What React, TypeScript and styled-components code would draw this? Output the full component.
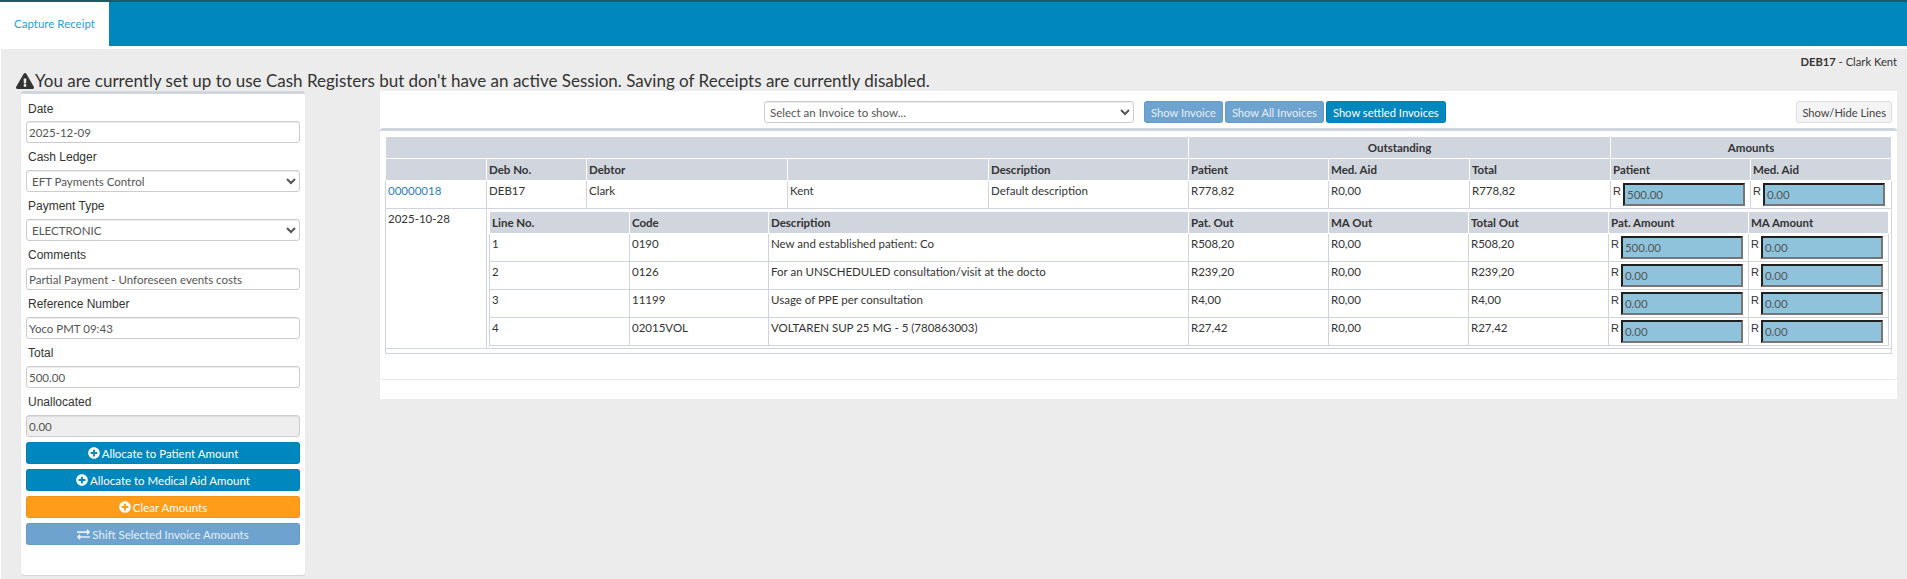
import * as React from 'react';
import styled, { createGlobalStyle } from 'styled-components';
import { FaExchangeAlt, FaExclamationTriangle, FaPlusCircle } from 'react-icons/fa';

const UI_FONT = `Lato, 'Noto Sans', sans-serif`;
const LABEL_FONT = `'Liberation Sans', Arial, sans-serif`;

const colors = {
  blue: '#0087bd',
  orange: '#ff9c1a',
  muted: '#6ea3d0',
  head: '#d0d5de',
  line: '#d0d4e0',
  field: '#8fc3dc',
  text: '#333',
};

type InvoiceLine = {
  no: string;
  code: string;
  description: string;
  patOut: string;
  maOut: string;
  total: string;
  patAmount: string;
};

const lines: InvoiceLine[] = [
  { no: '1', code: '0190', description: 'New and established patient: Co', patOut: 'R508,20', maOut: 'R0,00', total: 'R508,20', patAmount: '500.00' },
  { no: '2', code: '0126', description: 'For an UNSCHEDULED consultation/visit at the docto', patOut: 'R239,20', maOut: 'R0,00', total: 'R239,20', patAmount: '0.00' },
  { no: '3', code: '11199', description: 'Usage of PPE per consultation', patOut: 'R4,00', maOut: 'R0,00', total: 'R4,00', patAmount: '0.00' },
  { no: '4', code: '02015VOL', description: 'VOLTAREN SUP 25 MG - 5 (780863003)', patOut: 'R27,42', maOut: 'R0,00', total: 'R27,42', patAmount: '0.00' },
];

const outerCols = [101, 100, 201, 201, 200, 140, 141, 141, 140, 141];
const innerCols = [140, 139, 420, 140, 140, 140, 140, 140];

const AmountField = ({ value }: { value: string }) => (
  <AmountWrap>
    <span>R</span>
    <AmountInput defaultValue={value} />
  </AmountWrap>
);

export default function App() {
  return (
    <>
      <GlobalStyle />
      <Page>
        <Header>
          <ActiveTab>Capture Receipt</ActiveTab>
        </Header>
        <Main>
          <PatientLine>
            <b>DEB17</b> - Clark Kent
          </PatientLine>
          <Warning>
            <FaExclamationTriangle size={18} />
            You are currently set up to use Cash Registers but don't have an active Session. Saving of Receipts are currently disabled.
          </Warning>
          <Columns>
            <FormPanel>
              <FieldLabel>Date</FieldLabel>
              <TextInput defaultValue="2025-12-09" />
              <FieldLabel>Cash Ledger</FieldLabel>
              <SelectInput defaultValue="EFT Payments Control">
                <option>EFT Payments Control</option>
              </SelectInput>
              <FieldLabel>Payment Type</FieldLabel>
              <SelectInput defaultValue="ELECTRONIC">
                <option>ELECTRONIC</option>
              </SelectInput>
              <FieldLabel>Comments</FieldLabel>
              <TextInput defaultValue="Partial Payment - Unforeseen events costs" />
              <FieldLabel>Reference Number</FieldLabel>
              <TextInput defaultValue="Yoco PMT 09:43" />
              <FieldLabel>Total</FieldLabel>
              <TextInput defaultValue="500.00" />
              <FieldLabel>Unallocated</FieldLabel>
              <TextInput defaultValue="0.00" disabled />
              <ActionStack>
                <ActionButton $bg={colors.blue}>
                  <FaPlusCircle size={12} /> Allocate to Patient Amount
                </ActionButton>
                <ActionButton $bg={colors.blue}>
                  <FaPlusCircle size={12} /> Allocate to Medical Aid Amount
                </ActionButton>
                <ActionButton $bg={colors.orange}>
                  <FaPlusCircle size={12} /> Clear Amounts
                </ActionButton>
                <ActionButton $bg={colors.muted}>
                  <FaExchangeAlt size={13} /> Shift Selected Invoice Amounts
                </ActionButton>
              </ActionStack>
            </FormPanel>
            <InvoicePanel>
              <Toolbar>
                <InvoiceSelect defaultValue="Select an Invoice to show...">
                  <option>Select an Invoice to show...</option>
                </InvoiceSelect>
                <ToolbarButton $bg={colors.muted}>Show Invoice</ToolbarButton>
                <ToolbarButton $bg={colors.muted}>Show All Invoices</ToolbarButton>
                <ToolbarButton $bg={colors.blue}>Show settled Invoices</ToolbarButton>
                <LinesButton>Show/Hide Lines</LinesButton>
              </Toolbar>
              <InvoiceCard>
                <OuterTable>
                  <colgroup>
                    {outerCols.map((w, i) => (
                      <col key={i} style={{ width: w }} />
                    ))}
                  </colgroup>
                  <thead>
                    <tr>
                      <Th colSpan={5} />
                      <Th colSpan={3} $center>Outstanding</Th>
                      <Th colSpan={2} $center>Amounts</Th>
                    </tr>
                    <tr>
                      <Th />
                      <Th>Deb No.</Th>
                      <Th>Debtor</Th>
                      <Th />
                      <Th>Description</Th>
                      <Th>Patient</Th>
                      <Th>Med. Aid</Th>
                      <Th>Total</Th>
                      <Th>Patient</Th>
                      <Th>Med. Aid</Th>
                    </tr>
                  </thead>
                  <tbody>
                    <SummaryRow>
                      <Td><InvoiceLink href="#">00000018</InvoiceLink></Td>
                      <Td>DEB17</Td>
                      <Td>Clark</Td>
                      <Td>Kent</Td>
                      <Td>Default description</Td>
                      <Td>R778,82</Td>
                      <Td>R0,00</Td>
                      <Td>R778,82</Td>
                      <Td><AmountField value="500.00" /></Td>
                      <Td><AmountField value="0.00" /></Td>
                    </SummaryRow>
                    <tr>
                      <Td>2025-10-28</Td>
                      <NestCell colSpan={9}>
                        <InnerTable>
                          <colgroup>
                            {innerCols.map((w, i) => (
                              <col key={i} style={{ width: w }} />
                            ))}
                          </colgroup>
                          <thead>
                            <tr>
                              <Th>Line No.</Th>
                              <Th>Code</Th>
                              <Th>Description</Th>
                              <Th>Pat. Out</Th>
                              <Th>MA Out</Th>
                              <Th>Total Out</Th>
                              <Th>Pat. Amount</Th>
                              <Th>MA Amount</Th>
                            </tr>
                          </thead>
                          <tbody>
                            {lines.map((line) => (
                              <LineRow key={line.no}>
                                <Td>{line.no}</Td>
                                <Td>{line.code}</Td>
                                <Td>{line.description}</Td>
                                <Td>{line.patOut}</Td>
                                <Td>{line.maOut}</Td>
                                <Td>{line.total}</Td>
                                <Td><AmountField value={line.patAmount} /></Td>
                                <Td><AmountField value="0.00" /></Td>
                              </LineRow>
                            ))}
                          </tbody>
                        </InnerTable>
                      </NestCell>
                    </tr>
                    <FooterRow>
                      <td colSpan={10} />
                    </FooterRow>
                  </tbody>
                </OuterTable>
              </InvoiceCard>
            </InvoicePanel>
          </Columns>
        </Main>
      </Page>
    </>
  );
}

const GlobalStyle = createGlobalStyle`
  html, body {
    margin: 0;
    padding: 0;
    background: #fff;
    overflow: hidden;
  }
  * {
    box-sizing: border-box;
  }
`;

const Page = styled.div`
  height: 579px;
  font-family: ${UI_FONT};
  font-size: 11.5px;
  color: ${colors.text};
`;

const Header = styled.div`
  height: 46px;
  margin-bottom: 3px;
  background: ${colors.blue};
  border-top: 2px solid #1f5a63;
`;

const ActiveTab = styled.div`
  width: 109px;
  height: 44px;
  line-height: 44px;
  text-align: center;
  font-size: 11.5px;
  color: #2a9fd6;
  background: #fff;
`;

const Main = styled.div`
  height: 530px;
  margin-left: 1px;
  padding: 0 10px 0 20px;
  background: #ececec;
`;

const PatientLine = styled.div`
  height: 14px;
  padding-top: 6px;
  box-sizing: content-box;
  text-align: right;
  font-size: 11.2px;
  line-height: 14px;
`;

const Warning = styled.div`
  display: flex;
  align-items: center;
  margin-left: -5px;
  height: 20px;
  margin-top: 2px;
  font-size: 17px;
  line-height: 20px;
  white-space: nowrap;

  svg {
    flex: none;
    margin-right: 1px;
  }
`;

const Columns = styled.div`
  display: grid;
  grid-template-columns: 284px 1517px;
  column-gap: 75px;
  align-items: start;
`;

const FormPanel = styled.div`
  height: 484px;
  padding: 3px 5px 0;
  background: #fff;
  border-top: 3px solid ${colors.head};
  border-radius: 3px;
  box-shadow: 0 1px 1px rgba(0, 0, 0, 0.1);
`;

const FieldLabel = styled.div`
  height: 27px;
  padding: 0 2px;
  font-family: ${LABEL_FONT};
  font-size: 12px;
  line-height: 28px;
  &:first-child {
    height: 24px;
    line-height: 25px;
  }
`;

const inputBase = `
  display: block;
  width: 100%;
  height: 22px;
  border: 1px solid #ccc;
  border-radius: 3px;
  font-family: ${UI_FONT};
  font-size: 11.5px;
  color: #555;
  background-color: #fff;
  outline: none;
  box-shadow: inset 0 1px 1px rgba(0, 0, 0, 0.075);
`;

const TextInput = styled.input`
  ${inputBase}
  padding: 0 2px;
  &:disabled {
    background: #eee;
    opacity: 1;
  }
`;

const SelectInput = styled.select`
  ${inputBase}
  padding: 0 1px;
`;

const ActionStack = styled.div`
  display: flex;
  flex-direction: column;
  gap: 5px;
  margin-top: 5px;
`;

const ActionButton = styled.button<{ $bg: string }>`
  display: flex;
  align-items: center;
  justify-content: center;
  gap: 2px;
  height: 22px;
  padding: 0;
  border: 1px solid rgba(0, 0, 0, 0.05);
  border-radius: 3px;
  font-family: ${UI_FONT};
  font-size: 11.5px;
  color: ${(p) => (p.$bg === colors.muted ? '#e6eff7' : '#fff')};
  background: ${(p) => p.$bg};
`;

const InvoicePanel = styled.div`
  height: 308px;
  background: #fff;
`;

const Toolbar = styled.div`
  display: flex;
  align-items: flex-start;
  gap: 2px;
  height: 37px;
  padding: 10px 5px 0 384px;
`;

const InvoiceSelect = styled.select`
  ${inputBase}
  width: 370px;
  margin-right: 8px;
  padding: 0 1px;
`;

const ToolbarButton = styled.button<{ $bg: string }>`
  height: 22px;
  padding: 0 6px;
  border: 1px solid rgba(0, 0, 0, 0.05);
  border-radius: 3px;
  font-family: ${UI_FONT};
  font-size: 11.2px;
  color: ${(p) => (p.$bg === colors.muted ? '#e6eff7' : '#fff')};
  background: ${(p) => p.$bg};
`;

const LinesButton = styled.button`
  height: 22px;
  margin-left: auto;
  padding: 0 5px;
  border: 1px solid #ddd;
  border-radius: 3px;
  font-family: ${UI_FONT};
  font-size: 11.2px;
  color: #444;
  background: #f4f4f4;
`;

const InvoiceCard = styled.div`
  height: 251px;
  padding: 5px 6px 0 5px;
  background: #fff;
  border-top: 3px solid ${colors.head};
  border-radius: 3px;
  box-shadow: 0 1px 1px rgba(0, 0, 0, 0.1);
`;

const OuterTable = styled.table`
  width: 1506px;
  table-layout: fixed;
  border-collapse: collapse;
`;

const InnerTable = styled.table`
  width: 1399px;
  table-layout: fixed;
  border-collapse: collapse;
`;

const Th = styled.th<{ $center?: boolean }>`
  height: 22px;
  padding: 0 2px;
  border: 1px solid #fff;
  font-size: 11.5px;
  font-weight: 700;
  text-align: ${(p) => (p.$center ? 'center' : 'left')};
  background: ${colors.head};
`;

const Td = styled.td`
  padding: 2px;
  border: 1px solid ${colors.line};
  font-size: 11.5px;
  line-height: 16px;
  vertical-align: top;
  white-space: nowrap;
  overflow: hidden;
`;

const SummaryRow = styled.tr`
  height: 28px;
`;

const LineRow = styled.tr`
  height: 28px;
`;

const FooterRow = styled.tr`
  height: 5px;
  border: 1px solid ${colors.line};
`;

const NestCell = styled.td`
  padding: 2px;
  border: 1px solid ${colors.line};
`;

const InvoiceLink = styled.a`
  color: #2a7fc0;
  text-decoration: none;
`;

const AmountWrap = styled.div`
  display: flex;
  font-family: ${LABEL_FONT};
  font-size: 11px;
  line-height: 16px;
`;

const AmountInput = styled.input`
  width: 122px;
  height: 23px;
  margin-left: 2px;
  padding: 0 2px;
  border-width: 2px;
  border-style: solid;
  border-color: #1f1f1f #767676 #767676 #1f1f1f;
  font-family: ${UI_FONT};
  font-size: 11.5px;
  color: #555;
  background: ${colors.field};
  outline: none;
`;
